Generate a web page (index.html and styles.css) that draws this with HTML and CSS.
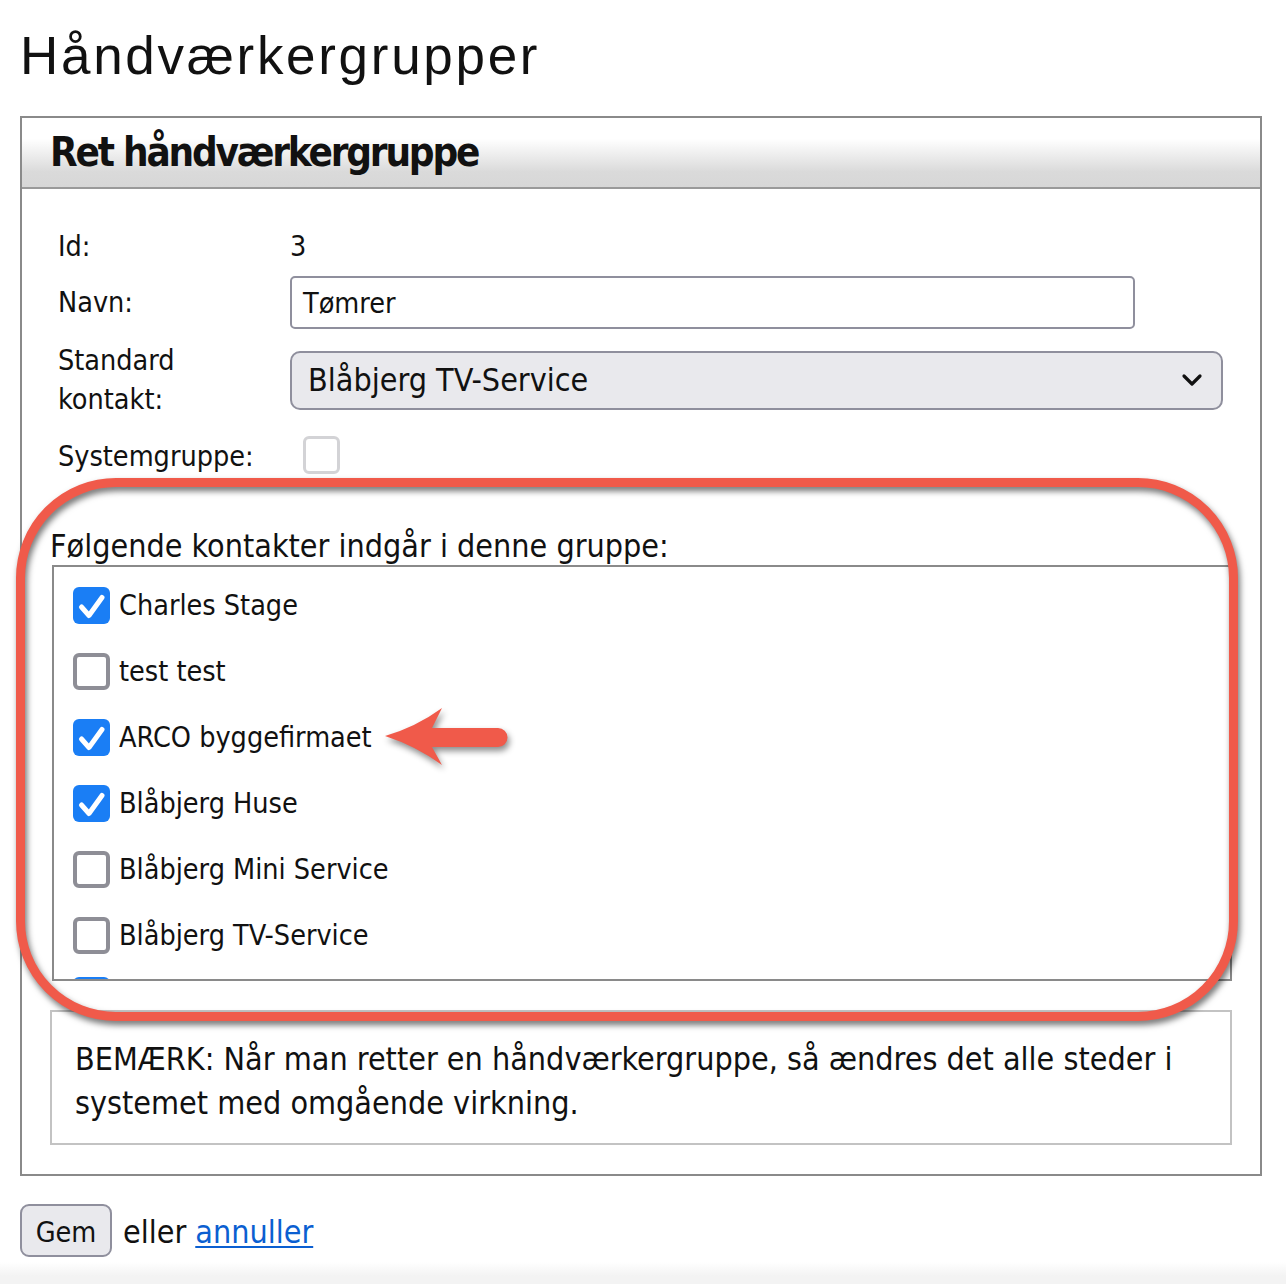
FILE: index.html
```html
<!DOCTYPE html>
<html lang="da">
<head>
<meta charset="utf-8">
<title>Håndværkergrupper</title>
<link rel="stylesheet" href="styles.css">
</head>
<body>
<h1 class="page-title">Håndværkergrupper</h1>

<div class="panel">
  <div class="panel-head"><h2>Ret håndværkergruppe</h2></div>
  <div class="panel-body">
    <div class="form">
      <div class="row row-id"><div class="lbl">Id:</div><div class="val">3</div></div>
      <div class="row row-name"><div class="lbl">Navn:</div><div class="val"><div class="text-input">Tømrer</div></div></div>
      <div class="row row-std"><div class="lbl">Standard<br>kontakt:</div>
        <div class="val"><div class="select"><span>Blåbjerg TV-Service</span>
          <svg class="chev" width="22" height="14" viewBox="0 0 22 14"><path d="M3 3 L11 11 L19 3" fill="none" stroke="#111" stroke-width="3.2" stroke-linecap="round" stroke-linejoin="round"/></svg>
        </div></div>
      </div>
      <div class="row row-sys"><div class="lbl">Systemgruppe:</div><div class="val"><span class="cb cb-disabled"></span></div></div>
    </div>

    <div class="list-label">Følgende kontakter indgår i denne gruppe:</div>
    <div class="list">
      <div class="item"><span class="cb cb-on"><svg viewBox="0 0 37 37" width="37" height="37"><path d="M8.5 20 L16 28.5 L29 10.5" fill="none" stroke="#fff" stroke-width="5" stroke-linecap="round" stroke-linejoin="round"/></svg></span><span>Charles Stage</span></div>
      <div class="item"><span class="cb cb-off"></span><span>test test</span></div>
      <div class="item"><span class="cb cb-on"><svg viewBox="0 0 37 37" width="37" height="37"><path d="M8.5 20 L16 28.5 L29 10.5" fill="none" stroke="#fff" stroke-width="5" stroke-linecap="round" stroke-linejoin="round"/></svg></span><span>ARCO byggefirmaet</span></div>
      <div class="item"><span class="cb cb-on"><svg viewBox="0 0 37 37" width="37" height="37"><path d="M8.5 20 L16 28.5 L29 10.5" fill="none" stroke="#fff" stroke-width="5" stroke-linecap="round" stroke-linejoin="round"/></svg></span><span>Blåbjerg Huse</span></div>
      <div class="item"><span class="cb cb-off"></span><span>Blåbjerg Mini Service</span></div>
      <div class="item"><span class="cb cb-off"></span><span>Blåbjerg TV-Service</span></div>
      <div class="item-peek"><span class="cb cb-on"></span></div>
    </div>

    <div class="note">BEMÆRK: Når man retter en håndværkergruppe, så ændres det alle steder i systemet med omgående virkning.</div>
  </div>
</div>

<div class="actions"><button class="btn" type="button">Gem</button><span class="or">eller</span><a class="cancel" href="#">annuller</a></div>

<div class="annot-box"></div>
<svg class="annot-arrow" width="140" height="80" viewBox="0 0 140 80">
  <path d="M5 36 Q36 27 62 8 L52 28 L118 28 A9.5 9.5 0 0 1 118 47 L52 47 L62 65 Q36 46 5 36 Z" fill="#f05a4a"/>
</svg>
</body>
</html>
```

FILE: styles.css
```css
* { box-sizing: border-box; }

html, body {
  margin: 0;
  padding: 0;
}

body {
  width: 1286px;
  min-height: 1284px;
  position: relative;
  background: linear-gradient(to bottom, #ffffff 0, #ffffff 1262px, #f3f3f3 1276px, #f3f3f3 100%);
  font-family: "DejaVu Sans Condensed", "DejaVu Sans", sans-serif;
  font-stretch: condensed;
  font-size: 28.5px;
  color: #111;
}

.page-title {
  margin: 0;
  padding: 29px 0 0 20px;
  height: 116px;
  font-family: "Liberation Sans", Arial, sans-serif;
  font-stretch: normal;
  font-weight: normal;
  font-size: 53px;
  line-height: 54px;
  letter-spacing: 2.7px;
  color: #111;
}

.panel {
  margin-left: 20px;
  width: 1242px;
  border: 2px solid #8a8a8a;
}

.panel-head {
  height: 71px;
  border-bottom: 2px solid #9a9a9a;
  background: linear-gradient(to bottom, #ffffff 0%, #ffffff 30%, #ececec 55%, #dadada 78%, #d7d7d7 100%);
}

.panel-head h2 {
  margin: 0;
  padding-left: 28px;
  font-size: 40px;
  line-height: 69px;
  font-weight: bold;
  letter-spacing: -2.2px;
  color: #111;
}

.panel-body {
  padding: 38px 28px 29px 28px;
}

.form {
  padding-left: 8px;
}

.row {
  display: grid;
  grid-template-columns: 232px 1fr;
  align-items: center;
}

.row-id { height: 40px; line-height: 40px; }
.row-name { height: 53px; margin-top: 9px; }
.row-std { height: 78px; margin-top: 12px; }
.row-std .lbl { line-height: 39px; }
.row-sys { height: 38px; margin-top: 17px; }
.row-sys .lbl { padding-top: 3px; }

.text-input {
  width: 845px;
  height: 53px;
  border: 2px solid #8f8f9d;
  border-radius: 5px;
  background: #fff;
  padding-left: 11px;
  line-height: 51px;
}

.select {
  width: 933px;
  height: 59px;
  border: 2px solid #8f8f9d;
  border-radius: 10px;
  background: #e9e9ed;
  padding: 0 18px 0 16px;
  display: flex;
  align-items: center;
  justify-content: space-between;
  font-size: 32px;
}

.cb {
  display: inline-block;
  width: 37px;
  height: 37px;
  border-radius: 6px;
  flex: none;
}

.cb svg { display: block; }

.cb-on { background: #1a7ef5; }

.cb-off {
  background: #fff;
  border: 4px solid #8e8e96;
}

.cb-disabled {
  display: block;
  margin-left: 13px;
  width: 37px;
  height: 38px;
  background: #fff;
  border: 3px solid #d3d3d6;
}

.list-label {
  margin-top: 53px;
  height: 38px;
  line-height: 38px;
  font-size: 32px;
}

.list {
  margin-left: 2px;
  width: 1180px;
  height: 416px;
  border: 2px solid #8a8a8a;
  overflow: hidden;
  padding: 5px 0 0 19px;
}

.item {
  height: 66px;
  display: flex;
  align-items: center;
  gap: 9px;
}

.item-peek {
  padding-top: 9px;
}

.note {
  margin-top: 29px;
  height: 135px;
  border: 2px solid #c3c3c3;
  padding: 25px 23px 0 23px;
  line-height: 44px;
  font-size: 32px;
}

.actions {
  margin: 28px 0 0 20px;
  display: flex;
  align-items: center;
  height: 53px;
  font-size: 32px;
}

.btn {
  width: 92px;
  height: 53px;
  border: 2px solid #8f8f9d;
  border-radius: 9px;
  background: #e9e9ed;
  font: inherit;
  font-family: "DejaVu Sans Condensed", "DejaVu Sans", sans-serif;
  font-stretch: condensed;
  font-size: 28.5px;
  line-height: 49px;
  color: #111;
  padding: 2px 0 0 0;
}

.or { margin-left: 11px; padding-top: 3px; }

.cancel {
  margin-left: 9px;
  padding-top: 3px;
  color: #0b5fd1;
  text-decoration: underline;
  text-decoration-thickness: 2px;
  text-underline-offset: 3px;
}

.annot-box {
  position: absolute;
  left: 16px;
  top: 478px;
  width: 1222px;
  height: 543px;
  border: 9px solid #f05a4a;
  border-radius: 100px;
  filter: drop-shadow(2px 4px 3px rgba(0, 0, 0, 0.55));
  pointer-events: none;
}

.annot-arrow {
  position: absolute;
  left: 380px;
  top: 700px;
  filter: drop-shadow(2px 4px 3px rgba(0, 0, 0, 0.45));
}
```
